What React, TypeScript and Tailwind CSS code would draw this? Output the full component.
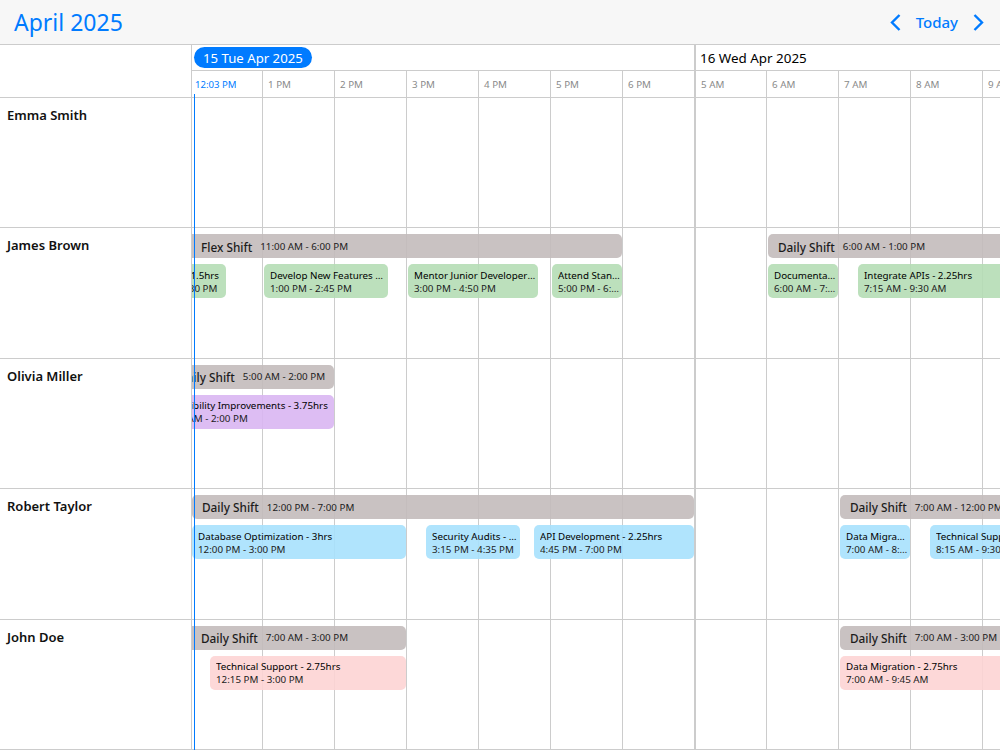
import React from "react";

// Timeline columns: one entry per hour, first column of each day sits flush
// against the previous day's thick divider.
const DAY_ONE = ["", "1 PM", "2 PM", "3 PM", "4 PM", "5 PM", "6 PM"];
const DAY_TWO = ["5 AM", "6 AM", "7 AM", "8 AM", "9 AM"];

type Shift = { left: number; width: number; pad: number; title: string; time: string };
type Task = { left: number; width: number; pad?: number; title: string; time: string };
type Row = { name: string; color: string; shifts: Shift[]; tasks: Task[] };

const ROWS: Row[] = [
  { name: "Emma Smith", color: "", shifts: [], tasks: [] },
  {
    name: "James Brown",
    color: "bg-[#b5ddb5]/90",
    shifts: [
      { left: -72, width: 502, pad: 81, title: "Flex Shift", time: "11:00 AM - 6:00 PM" },
      { left: 576, width: 504, pad: 10, title: "Daily Shift", time: "6:00 AM - 1:00 PM" },
    ],
    tasks: [
      { left: -74, width: 108, title: "Code Review - 1.5hrs", time: "11:00 AM - 12:30 PM" },
      { left: 72, width: 124, title: "Develop New Features - 1.75hrs", time: "1:00 PM - 2:45 PM" },
      { left: 216, width: 130, title: "Mentor Junior Developers - 1.8hrs", time: "3:00 PM - 4:50 PM" },
      { left: 360, width: 70, title: "Attend Standup - 1hr", time: "5:00 PM - 6:00 PM" },
      { left: 576, width: 70, title: "Documentation - 1hr", time: "6:00 AM - 7:00 AM" },
      { left: 666, width: 162, title: "Integrate APIs - 2.25hrs", time: "7:15 AM - 9:30 AM" },
    ],
  },
  {
    name: "Olivia Miller",
    color: "bg-[#d9b6f2]/90",
    shifts: [{ left: -504, width: 646, pad: 490, title: "Daily Shift", time: "5:00 AM - 2:00 PM" }],
    tasks: [
      {
        left: -128,
        width: 270,
        pad: 96,
        title: "Accessibility Improvements - 3.75hrs",
        time: "10:15 AM - 2:00 PM",
      },
    ],
  },
  {
    name: "Robert Taylor",
    color: "bg-[#a7e1fd]/90",
    shifts: [
      { left: 0, width: 502, pad: 10, title: "Daily Shift", time: "12:00 PM - 7:00 PM" },
      { left: 648, width: 360, pad: 10, title: "Daily Shift", time: "7:00 AM - 12:00 PM" },
    ],
    tasks: [
      { left: 0, width: 214, title: "Database Optimization - 3hrs", time: "12:00 PM - 3:00 PM" },
      { left: 234, width: 94, title: "Security Audits - 1.33hrs", time: "3:15 PM - 4:35 PM" },
      { left: 342, width: 160, title: "API Development - 2.25hrs", time: "4:45 PM - 7:00 PM" },
      { left: 648, width: 70, title: "Data Migration - 1hr", time: "7:00 AM - 8:00 AM" },
      { left: 738, width: 90, title: "Technical Support - 1.25hrs", time: "8:15 AM - 9:30 AM" },
    ],
  },
  {
    name: "John Doe",
    color: "bg-[#fdd4d4]/90",
    shifts: [
      { left: -360, width: 574, pad: 369, title: "Daily Shift", time: "7:00 AM - 3:00 PM" },
      { left: 648, width: 576, pad: 10, title: "Daily Shift", time: "7:00 AM - 3:00 PM" },
    ],
    tasks: [
      { left: 18, width: 196, title: "Technical Support - 2.75hrs", time: "12:15 PM - 3:00 PM" },
      { left: 648, width: 198, title: "Data Migration - 2.75hrs", time: "7:00 AM - 9:45 AM" },
    ],
  },
];

function Columns({ labels }: { labels?: boolean }) {
  const dayOneWidth = (i: number) =>
    i === 0 ? "w-[71px] border-r" : i === 6 ? "w-[73px] border-r-2" : "w-[72px] border-r";
  return (
    <div className="flex h-full">
      {DAY_ONE.map((label, i) => (
        <div key={i} className={`${dayOneWidth(i)} shrink-0 border-[#ccc] pt-[7px] pl-[5px]`}>
          {labels && <span className="block text-[9.8px] leading-[14px] text-[#8a8a8a]">{label}</span>}
        </div>
      ))}
      {DAY_TWO.map((label, i) => (
        <div
          key={label}
          className={`${i === 0 ? "w-[71px]" : "w-[72px]"} shrink-0 border-r border-[#ccc] pt-[7px] pl-[5px]`}
        >
          {labels && <span className="block whitespace-nowrap text-[9.8px] leading-[14px] text-[#8a8a8a]">{label}</span>}
        </div>
      ))}
    </div>
  );
}

function ShiftBar({ shift, top }: { shift: Shift; top: number }) {
  return (
    <div
      className="absolute flex h-6 items-center gap-[8px] whitespace-nowrap rounded-[5px] bg-[#c3bbbb]/90 pt-[2px] text-[#1c1c1c]"
      style={{ top, left: shift.left, width: shift.width, paddingLeft: shift.pad }}
    >
      <span className="text-[11.8px] font-medium">{shift.title}</span>
      <span className="text-[9.8px]">{shift.time}</span>
    </div>
  );
}

function TaskCard({ task, color }: { task: Task; color: string }) {
  return (
    <div
      className={`absolute top-[36px] flex h-[34px] flex-col justify-center rounded-[5px] pr-[2px] pt-[1px] text-[9.8px] leading-[13px] text-[#1c1c1c] ${color}`}
      style={{ left: task.left, width: task.width, paddingLeft: task.pad ?? 6 }}
    >
      <div className="truncate text-black">{task.title}</div>
      <div className="truncate">{task.time}</div>
    </div>
  );
}

export default function App() {
  return (
    <div className="relative flex h-[750px] w-[1000px] flex-col overflow-hidden bg-white font-['Noto_Sans',sans-serif]">
      <header className="flex h-[45px] shrink-0 items-center justify-between border-b border-[#ccc] bg-[#f7f7f7] pl-[14px] pr-[16px]">
        <h1 className="pt-px text-[23px] text-[#007bff]">April 2025</h1>
        <div className="flex items-center gap-[15px] text-[#007bff]">
          <svg width="11" height="17" viewBox="0 0 11 17" fill="none" stroke="currentColor" strokeWidth="2.4">
            <path d="M9.5 1 2 8.5 9.5 16" />
          </svg>
          <span className="text-[15px] font-medium">Today</span>
          <svg width="11" height="17" viewBox="0 0 11 17" fill="none" stroke="currentColor" strokeWidth="2.4">
            <path d="M1.5 1 9 8.5 1.5 16" />
          </svg>
        </div>
      </header>

      <div className="flex h-[53px] shrink-0">
        <div className="w-[192px] shrink-0 border-r border-b border-[#ccc]" />
        <div className="min-w-0 flex-1 overflow-hidden">
          <div className="flex h-[26px] border-b border-[#ccc]">
            <div className="flex w-[504px] shrink-0 items-center border-r-2 border-[#ccc] pl-[2px]">
              <span className="rounded-full bg-[#007bff] px-[9px] pt-px text-[13.2px] leading-[20px] text-white">
                15 Tue Apr 2025
              </span>
            </div>
            <div className="flex items-center pl-[4px] pt-[2px] text-[13.4px] text-black">16 Wed Apr 2025</div>
          </div>
          <div className="relative h-[27px] border-b border-[#ccc]">
            <Columns labels />
            <span className="absolute left-[3px] top-[7px] text-[9.6px] leading-[14px] text-[#007bff]">12:03 PM</span>
          </div>
        </div>
      </div>

      {ROWS.map((row) => (
        <div key={row.name} className="flex min-h-0 flex-1 border-b border-[#ccc]">
          <div className="w-[192px] shrink-0 border-r border-[#ccc] pl-[7px] pt-[7px] text-[13px] font-semibold leading-5 text-[#111]">
            {row.name}
          </div>
          <div className="relative min-w-0 flex-1 overflow-hidden">
            <Columns />
            {row.shifts.map((s, i) => (
              <ShiftBar key={i} shift={s} top={6} />
            ))}
            {row.tasks.map((t, i) => (
              <TaskCard key={i} task={t} color={row.color} />
            ))}
          </div>
        </div>
      ))}

      {/* current time marker */}
      <div className="absolute bottom-0 left-[193.5px] top-[94px] w-[1.5px] bg-[#007bff]" />
    </div>
  );
}
